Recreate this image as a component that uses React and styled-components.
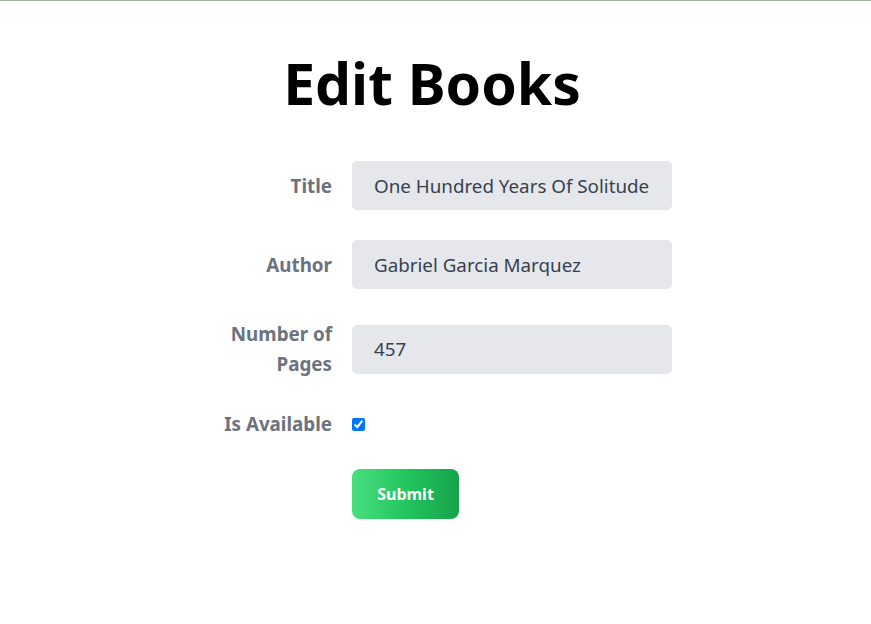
import React, { useState } from "react";
import styled, { createGlobalStyle } from "styled-components";

const GlobalStyle = createGlobalStyle`
  body {
    margin: 0;
    border-top: 1px solid #a3b8a0;
    background: #fff;
    font-family: "Noto Sans", "Open Sans", Arial, sans-serif;
  }
`;

const App = () => {
  const [book, setBook] = useState({
    title: "One Hundred Years Of Solitude",
    author: "Gabriel Garcia Marquez",
    pages: "457",
    isAvailable: true,
  });

  const onChangeHandler = (event) => {
    const { name, value, type, checked } = event.target;
    setBook({ ...book, [name]: type === "checkbox" ? checked : value });
  };

  const onSubmitHandler = (event) => {
    event.preventDefault();
  };

  return (
    <>
      <GlobalStyle />
      <StPage>
        <StHeading>Edit Books</StHeading>
        <StForm onSubmit={onSubmitHandler}>
          <StRow>
            <StLabel htmlFor="title">Title</StLabel>
            <StInput id="title" name="title" value={book.title} onChange={onChangeHandler} />
          </StRow>
          <StRow>
            <StLabel htmlFor="author">Author</StLabel>
            <StInput id="author" name="author" value={book.author} onChange={onChangeHandler} />
          </StRow>
          <StRow>
            <StLabel htmlFor="pages">Number of Pages</StLabel>
            <StInput id="pages" name="pages" value={book.pages} onChange={onChangeHandler} />
          </StRow>
          <StRow>
            <StLabel htmlFor="isAvailable">Is Available</StLabel>
            <StCell>
              <StCheckbox
                id="isAvailable"
                type="checkbox"
                name="isAvailable"
                checked={book.isAvailable}
                onChange={onChangeHandler}
              />
            </StCell>
          </StRow>
          <StRow>
            <StLabel as="span" />
            <StCell>
              <StSubmitButton type="submit">Submit</StSubmitButton>
            </StCell>
          </StRow>
        </StForm>
      </StPage>
    </>
  );
};

export default App;

const StPage = styled.div`
  display: flex;
  flex-direction: column;
  align-items: center;
  padding-top: 47px;
  padding-right: 7px;
`;

const StHeading = styled.h1`
  margin: 0 0 42px;
  font-size: 57px;
  font-weight: 700;
  line-height: 1.25;
  color: #000;
`;

const StForm = styled.form`
  width: 480px;
  display: flex;
  flex-direction: column;
  gap: 30px;
`;

const StRow = styled.div`
  display: flex;
  align-items: center;
`;

const StLabel = styled.label`
  width: 160px;
  flex-shrink: 0;
  box-sizing: border-box;
  padding: 0 20px 0 10px;
  text-align: right;
  font-size: 18.8px;
  line-height: 30px;
  font-weight: 700;
  color: #6b7280;
`;

const StInput = styled.input`
  width: 320px;
  height: 49px;
  box-sizing: border-box;
  border: 2px solid #e5e7eb;
  border-radius: 5px;
  background-color: #e5e7eb;
  padding: 0 20px;
  font-family: inherit;
  font-size: 18.8px;
  color: #374151;
  outline: none;
`;

const StCell = styled.div`
  display: flex;
  align-items: center;
`;

const StCheckbox = styled.input`
  margin: 0;
  width: 13px;
  height: 13px;
`;

const StSubmitButton = styled.button`
  width: 107px;
  height: 50px;
  border: none;
  border-radius: 8px;
  background: linear-gradient(to right, #4ade80, #22c55e, #16a34a);
  color: #fff;
  font-family: inherit;
  font-size: 16px;
  font-weight: 700;
  cursor: pointer;
`;
